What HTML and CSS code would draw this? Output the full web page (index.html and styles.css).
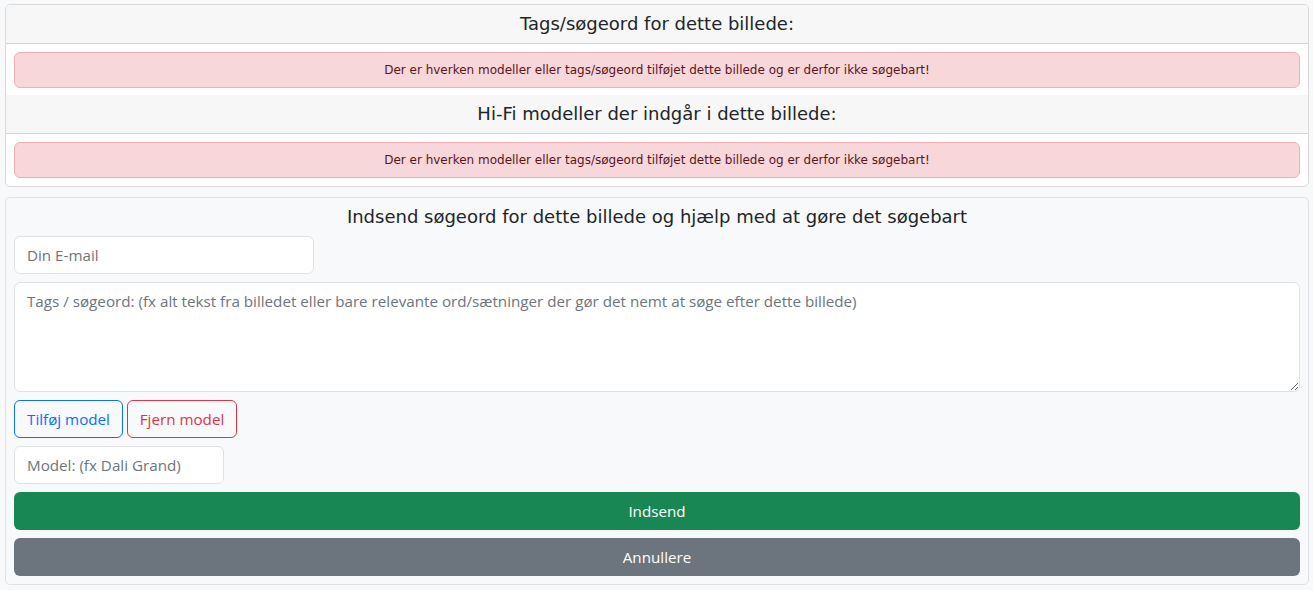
FILE: index.html
```html
<!DOCTYPE html>
<html lang="da">
<head>
<meta charset="utf-8">
<title>Tags</title>
<link rel="stylesheet" href="styles.css">
</head>
<body>
<div class="page">
  <section class="card info">
    <h2 class="card-head">Tags/søgeord for dette billede:</h2>
    <div class="card-body">
      <div class="alert">Der er hverken modeller eller tags/søgeord tilføjet dette billede og er derfor ikke søgebart!</div>
    </div>
    <h2 class="card-head">Hi-Fi modeller der indgår i dette billede:</h2>
    <div class="card-body last">
      <div class="alert">Der er hverken modeller eller tags/søgeord tilføjet dette billede og er derfor ikke søgebart!</div>
    </div>
  </section>
  <form class="card submit">
    <h2 class="form-title">Indsend søgeord for dette billede og hjælp med at gøre det søgebart</h2>
    <input class="field email" type="text" placeholder="Din E-mail">
    <textarea class="field tags" placeholder="Tags / søgeord: (fx alt tekst fra billedet eller bare relevante ord/sætninger der gør det nemt at søge efter dette billede)"></textarea>
    <div class="btn-row">
      <button type="button" class="btn btn-outline-blue">Tilføj model</button>
      <button type="button" class="btn btn-outline-red">Fjern model</button>
    </div>
    <input class="field model" type="text" placeholder="Model: (fx Dali Grand)">
    <button type="button" class="btn btn-block btn-green">Indsend</button>
    <button type="button" class="btn btn-block btn-gray">Annullere</button>
  </form>
</div>
</body>
</html>
```

FILE: styles.css
```css
* { box-sizing: border-box; }
html, body { margin: 0; padding: 0; }
body {
  background: #f8f9fa;
  font-family: "Open Sans", "Noto Sans", sans-serif;
  color: #212529;
}
.page {
  padding: 4px 4px 0 5px;
  display: flex;
  flex-direction: column;
  gap: 10px;
}
.card {
  border: 1px solid #d9d9d9;
  border-radius: 5px;
  overflow: hidden;
}
.info { background: #fff; }
.card-head {
  margin: 0;
  background: #f7f7f7;
  border-bottom: 1px solid #d4d4d4;
  font-family: "DejaVu Sans", Verdana, sans-serif;
  font-weight: normal;
  font-size: 18px;
  line-height: 38px;
  height: 39px;
  text-align: center;
  color: #212529;
}
.card-body { padding: 8px 8px 7px; }
.card-body.last { padding-bottom: 8px; }
.alert {
  background: #f8d7da;
  border: 1px solid #f1aeb5;
  border-radius: 6px;
  color: #58151c;
  font-family: "DejaVu Sans", Verdana, sans-serif;
  font-size: 12px;
  height: 36px;
  line-height: 34px;
  text-align: center;
}
.submit {
  background: #f8f9fa;
  border-color: #dee2e6;
  padding: 8px 8px 8px;
  display: flex;
  flex-direction: column;
  align-items: flex-start;
  gap: 8px;
}
.form-title {
  margin: 0;
  align-self: stretch;
  text-align: center;
  font-family: "DejaVu Sans", Verdana, sans-serif;
  font-weight: normal;
  font-size: 18px;
  line-height: 22px;
  height: 22px;
  color: #212529;
}
.field {
  font-family: "Open Sans", "Noto Sans", sans-serif;
  font-size: 15.2px;
  color: #212529;
  background: #fff;
  border: 1px solid #dee2e6;
  border-radius: 6px;
  padding: 6px 12px;
  height: 38px;
  outline: none;
}
.field::placeholder { color: #6c757d; opacity: 1; }
.email { width: 300px; }
.tags {
  align-self: stretch;
  height: 110px;
  resize: vertical;
  line-height: 24px;
}
.model { width: 210px; }
.btn-row { display: flex; gap: 4px; }
.btn {
  font-family: "Open Sans", "Noto Sans", sans-serif;
  font-size: 15.2px;
  height: 38px;
  border-radius: 6px;
  padding: 0;
  white-space: nowrap;
  background: transparent;
  cursor: pointer;
}
.btn-outline-blue { border: 1px solid #0d6efd; color: #0d6efd; width: 109px; }
.btn-outline-red { border: 1px solid #dc3545; color: #dc3545; width: 110px; }
.btn-block {
  align-self: stretch;
  border: none;
  color: #fff;
}
.btn-green { background: #198754; }
.btn-gray { background: #6c757d; }
```
